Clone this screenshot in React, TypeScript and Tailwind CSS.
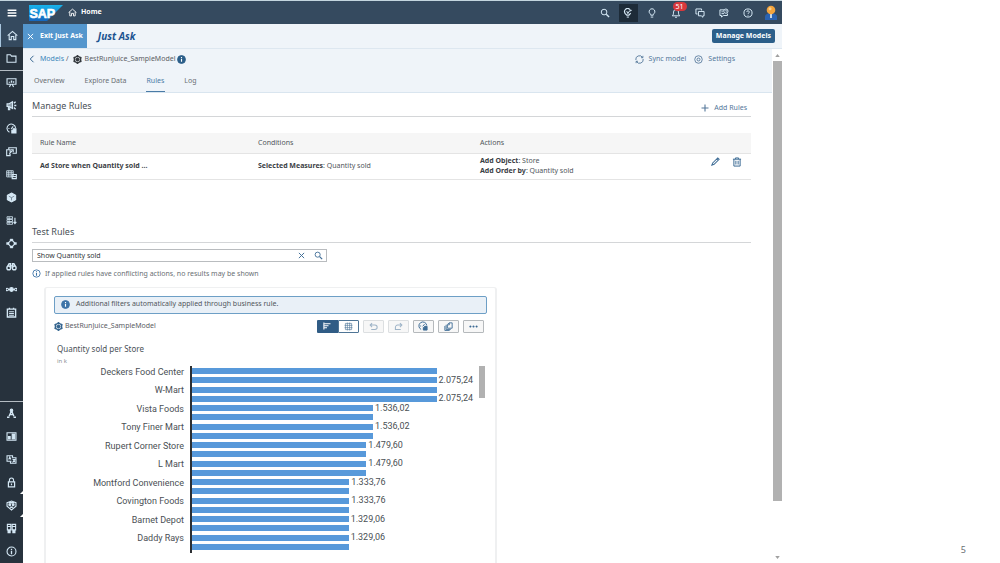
import { useState } from "react";
import type { ReactNode } from "react";

const glyphs: Record<string, ReactNode> = {
  menu: <path d="M1 3.5h14M1 8h14M1 12.5h14" strokeWidth="2.4" />,
  home: (
    <>
      <path d="M1 8.2 8 2l7 6.2" />
      <path d="M3.2 7v7h3V9.5h3.6V14h3V7" />
    </>
  ),
  folder: <path d="M1.5 13.5V2.5h5l1.5 2h6.5v9z" />,
  search: (
    <>
      <circle cx="6.5" cy="6.5" r="4.5" />
      <path d="m10 10 4.5 4.5" strokeWidth="2.2" />
    </>
  ),
  bulbSpark: (
    <>
      <path d="M10.500 1.800A5 5 0 0 0 3.300 8.500L6 11.500h3.500l2.800-3.200" strokeWidth="1.900" />
      <path d="M6 14.500h3.500" />
      <path d="m6 5 1.800 4 1.700-3.500 4-1.700-4-1.300" strokeWidth="1.600" />
    </>
  ),
  bulb: (
    <>
      <path d="M6 11.500V10A4.600 4.600 0 1 1 10 10v1.500z" />
      <path d="M6 14.500h4" />
    </>
  ),
  bell: (
    <>
      <path d="M2 12.500c2-1.500 2-3.500 2-6a4 4 0 0 1 8 0c0 2.500 0 4.500 2 6z" />
      <path d="M6.500 14.800h3" />
    </>
  ),
  chat: (
    <>
      <path d="M4 9.500H1.500v-8h9V4" />
      <path d="M5.500 5.500h9v7h-2v2.300L10 12.500H5.500z" />
    </>
  ),
  collab: (
    <>
      <path d="M8 3H1.500v9H4v2.500L7 12h6.500V9" />
      <circle cx="11" cy="5" r="3.400" />
      <path d="M11 3.500V5h1.500M4 6h2M4 9h4" />
    </>
  ),
  help: (
    <>
      <circle cx="8" cy="8" r="6.500" />
      <path d="M6 6.500a2 2 0 1 1 2.800 1.800c-.6.300-.8.600-.8 1.200M8 11v1.200" />
    </>
  ),
  story: (
    <>
      <path d="M1.500 2.500h13v8h-13zM5 14.500l2-4M11 14.500l-2-4" />
      <path d="M5 8.500V7M8 8.500V5M11 8.500V6" strokeWidth="2" />
    </>
  ),
  megaphone: (
    <>
      <path d="M1.500 5.500h3l5-3v10l-5-3h-3zM3.500 10v4h2v-3.500" fill="currentColor" fillOpacity="0.600" />
      <path d="M11.500 4.500 14 2.500M12 8h3M11.500 11l2.500 2.500" strokeWidth="2" />
    </>
  ),
  gauge: (
    <>
      <path d="M5 13.500A6.300 6.300 0 1 1 14 7M7.500 8.500l3-3.500M3.500 8H5" />
      <path d="M8.500 14.500v-4h2v-2h4v6z" fill="currentColor" />
    </>
  ),
  appDesign: (
    <>
      <path d="M4 5V2.500h11v8H9.500" />
      <path d="M1 5.500h5v8.500H1zM4.500 12l5-5.500" />
      <path d="M7 5.500h3.500V9" />
    </>
  ),
  dataset: (
    <>
      <path d="M1 2.500h9.500v9H1zM1 5.500h9.500M1 8.500h7M4 2.500v9M7.500 2.500v9" strokeWidth="1.200" />
      <path d="M9 8h6v6H9z" />
      <path d="M9 11h6" />
    </>
  ),
  cube: (
    <>
      <path d="m8 1.500 6 3.300v6.400L8 14.500l-6-3.300V4.800z" fill="currentColor" />
      <path d="m4 6 4 2.200L12 6M8 8.200v4" stroke="#596b7a" strokeWidth="1" />
    </>
  ),
  model: (
    <>
      <path d="m8 1.800 5.500 3.100v6.200L8 14.200l-5.500-3.100V4.900z" strokeWidth="2.400" />
      <path d="m8 5 2.800 1.500v3L8 11 5.200 9.500v-3z" fill="currentColor" />
      <g fill="currentColor" strokeWidth="0">
        <circle cx="8" cy="1.800" r="1.700" />
        <circle cx="13.500" cy="4.900" r="1.700" />
        <circle cx="13.500" cy="11.100" r="1.700" />
        <circle cx="8" cy="14.200" r="1.700" />
        <circle cx="2.500" cy="11.100" r="1.700" />
        <circle cx="2.500" cy="4.900" r="1.700" />
      </g>
    </>
  ),
  dataflow: (
    <>
      <path d="M1.500 2.500h8v3h-8zM1.500 6.500h8v3h-8zM1.500 10.500h8v3h-8zM4.500 3v10" strokeWidth="1.200" />
      <path d="M13 4v8M11 10l2 2.500 2-2.500" />
    </>
  ),
  network: (
    <>
      <path d="M8 2.500 13.500 8 8 13.500 2.500 8z" />
      <path d="M6 1.500h4v3H6zM6 11.500h4v3H6zM.8 6.500h3.700v3H.8zM11.500 6.500h3.700v3h-3.700z" fill="currentColor" strokeWidth="0.600" />
    </>
  ),
  binoculars: (
    <>
      <circle cx="4" cy="10" r="2.700" strokeWidth="2" />
      <circle cx="12" cy="10" r="2.700" strokeWidth="2" />
      <path d="M2.500 7.500 4.500 4h2v6M13.500 7.500l-2-3.500h-2v6M6.500 7h3" strokeWidth="2" />
    </>
  ),
  chain: (
    <>
      <circle cx="1.800" cy="8" r="1.800" />
      <circle cx="8" cy="8" r="2.700" fill="currentColor" />
      <circle cx="14.200" cy="8" r="1.800" />
      <path d="M3.600 8h8.800" />
    </>
  ),
  calendar: (
    <>
      <path d="M2 3h12v11.500H2zM5 1v3M11 1v3" strokeWidth="2" />
      <path d="M4.500 7h7M4.500 9.500h7M4.500 12h7" />
    </>
  ),
  compass: (
    <>
      <circle cx="8" cy="3.500" r="1.800" fill="currentColor" />
      <path d="M7.500 5 4.500 12M8.500 5l3 7M5 9.500h6" strokeWidth="2" />
      <path d="M1.500 13.500h3.500M11 13.500h3.500" strokeWidth="2.400" />
    </>
  ),
  layout: (
    <>
      <path d="M1.500 2.500h13v11h-13z" />
      <path d="M3.500 8h2.500v3.500H3.500zM9 4.500h3.500v7H9z" fill="currentColor" />
    </>
  ),
  translate: (
    <>
      <path d="M8 10.500H1.500v-8h8V5M4 8l1.500-3.500L7 8" />
      <path d="M8.500 5.500h6v8h-8v-3M9.500 8h4M12.500 8c0 2-1 3-3 4M10.500 9.500l2.500 2" />
    </>
  ),
  lock: (
    <>
      <path d="M5 7V4.500a3 3 0 0 1 6 0V7" />
      <path d="M3.500 7h9v7.500h-9zM8 9.500V12" strokeWidth="1.800" />
    </>
  ),
  support: (
    <>
      <path d="M1.500 4 8 1.500 14.500 4v5L8 14.500 1.500 9z" />
      <circle cx="5.500" cy="7" r="1.300" fill="currentColor" />
      <circle cx="10.500" cy="7" r="1.300" fill="currentColor" />
      <path d="M4 4h8M6 10.500h4" strokeWidth="2" />
    </>
  ),
  racks: (
    <>
      <path d="M2 2h5v8H2zM9 2h5v8H9zM2 5h5M9 5h5" />
      <path d="M3 14h3v-3H3zM10 14h3v-3h-3z" fill="currentColor" />
    </>
  ),
  info: (
    <>
      <circle cx="8" cy="8" r="6.500" />
      <path d="M8 7v5M8 4v1.700" strokeWidth="1.900" />
    </>
  ),
  infoSolid: (
    <>
      <circle cx="8" cy="8" r="7" fill="currentColor" />
      <path d="M8 7v5M8 3.700v2" stroke="#fff" strokeWidth="2" />
    </>
  ),
  close: <path d="m2 2 12 12M14 2 2 14" strokeWidth="2.200" />,
  back: <path d="M11 1.500 4.500 8l6.500 6.500" strokeWidth="2" />,
  sync: (
    <>
      <path d="M1.500 9A6.500 6.500 0 0 1 13.500 4.500M14.500 7A6.500 6.500 0 0 1 2.500 11.500" />
      <path d="M14 1.500v3.300h-3.300M2 14.500v-3.300h3.300" />
    </>
  ),
  settings: (
    <>
      <circle cx="8" cy="8" r="6.700" strokeWidth="1.500" />
      <circle cx="8" cy="8" r="2.600" />
    </>
  ),
  plus: <path d="M8 1v14M1 8h14" strokeWidth="2.200" />,
  edit: <path d="M1.500 14.500 3 10.500 12 1.500l2.500 2.500-9 9zM10 3.500 12.500 6" strokeWidth="1.800" />,
  trash: <path d="M1.500 3.500h13M5.500 3.500v-2h5v2M3 3.500v11h10v-11M6.200 6v6M9.800 6v6" />,
  bars: <path d="M1.800 1v14M3 3.500h12M3 7.500h8M3 11.500h5" strokeWidth="2.200" />,
  grid: <path d="M2.500 2.500h11v11h-11zM1 6h14M1 10h14M6 1v14M10 1v14" strokeWidth="1.100" />,
  undo: <path d="M5.500 2 2 5.500 5.500 9M2 5.500h8.500a3.800 3.800 0 0 1 0 8H4" strokeWidth="1.800" />,
  redo: <path d="M10.500 2 14 5.500 10.500 9M14 5.500H6.500a4 4 0 0 0-4 4v4H12" strokeWidth="1.800" />,
  copy: (
    <>
      <path d="M6 11V4.500l3-3h5.500V11z" />
      <path d="M3.800 5v8.200H12M1.500 7v8H10M6.500 5h3V2" />
    </>
  ),
  more: (
    <g fill="currentColor" strokeWidth="0.600">
      <circle cx="2.500" cy="8" r="1.500" />
      <circle cx="8" cy="8" r="1.500" />
      <circle cx="13.500" cy="8" r="1.500" />
    </g>
  ),
};

function Icon({ name, className = "size-[11px]" }: { name: string; className?: string }) {
  return (
    <svg viewBox="0 0 16 16" className={`shrink-0 ${className}`} fill="none" stroke="currentColor" strokeWidth="1.600" aria-hidden="true">
      {glyphs[name]}
    </svg>
  );
}

const mainNav = [
  ["story", "Stories"],
  ["megaphone", "Digital boardroom"],
  ["gauge", "Analytics"],
  ["appDesign", "Applications"],
  ["dataset", "Datasets"],
  ["cube", "Modeler"],
  ["dataflow", "Data flow"],
  ["network", "Allocations"],
  ["binoculars", "Data analyzer"],
  ["chain", "Multi actions"],
  ["calendar", "Calendar"],
];

const footerNav = [
  ["compass", "Content network"],
  ["layout", "Catalog"],
  ["translate", "Translation"],
  ["lock", "Security", "more"],
  ["support", "System", "more"],
  ["racks", "Deployment"],
  ["info", "About"],
];

function NavItem({ icon, label, active, more }: { icon: string; label: string; active?: boolean; more?: boolean }) {
  return (
    <button
      aria-label={label}
      className={`relative flex h-[23px] w-full items-center justify-center text-[#d5e8f5] ${active ? "border-l border-[#a9c6de] bg-[#354a5f]" : ""}`}
    >
      <Icon name={icon} />
      {more && (
        <svg viewBox="0 0 4 4" className="absolute right-0 bottom-0 size-[3px] fill-white" aria-hidden="true">
          <path d="M4 0v4H0z" />
        </svg>
      )}
    </button>
  );
}

const tools = [
  ["search", "Search"],
  ["bulbSpark", "Just Ask"],
  ["bulb", "Search to insight"],
  ["bell", "Notifications"],
  ["chat", "Discussions"],
  ["collab", "Collaboration"],
  ["help", "Help"],
];

function ShellBar() {
  return (
    <header className="flex h-6 shrink-0 items-center border-t border-[#c3d5de] bg-[#354a5f] text-white">
      <button aria-label="Menu" className="flex h-full w-[23px] items-center justify-center">
        <Icon name="menu" className="size-[10px]" />
      </button>
      <svg viewBox="0 0 34 16" className="ml-[6px] h-4 w-[34px]" role="img" aria-label="SAP">
        <defs>
          <linearGradient id="logo" x1="0" y1="0" x2="0" y2="1">
            <stop offset="0" stopColor="#18b4ec" />
            <stop offset="1" stopColor="#1666bd" />
          </linearGradient>
        </defs>
        <path d="M0 0h34L18 16H0z" fill="url(#logo)" />
        <text x="0.500" y="12.500" fill="#fff" stroke="#fff" strokeWidth="0.600" fontSize="12.500" fontWeight="700" fontFamily="Liberation Sans, sans-serif">
          SAP
        </text>
      </svg>
      <a href="#home" className="ml-[5px] flex items-center gap-[4px] text-[7px] font-bold">
        <Icon name="home" className="size-[9px]" />
        Home
      </a>
      <div className="ml-auto flex h-full items-center">
        {tools.map(([icon, label]) => (
          <div key={icon} className="flex w-[24px] justify-center first:w-[23px] last:w-[23px]">
            <button
              aria-label={label}
              className={`relative flex h-[18px] w-[19px] items-center justify-center text-[#d5e8f5] ${icon === "bulbSpark" ? "bg-[#1d2b38]" : ""}`}
            >
              <Icon name={icon} className="size-[10px]" />
              {icon === "bell" && (
                <span className="absolute -top-[2px] left-[6px] rounded-full bg-[#d8383c] px-[3px] text-[7px] leading-[9px] text-white">51</span>
              )}
            </button>
          </div>
        ))}
      </div>
      <svg viewBox="0 0 12 16" className="mr-[5px] ml-[6px] h-4 w-3" role="img" aria-label="Profile">
        <path d="M0 15v-3c0-3 3-4 6-4s6 1 6 4v3z" fill="#2a62b0" />
        <path d="M5 9h2v4H5z" fill="#c9d6e4" />
        <circle cx="6" cy="5" r="4.300" fill="#f3a43c" />
        <circle cx="5" cy="3.800" r="1.500" fill="#fbd08c" />
      </svg>
    </header>
  );
}

function SectionHeading({ title, children }: { title: string; children?: ReactNode }) {
  return (
    <div className="flex h-6 items-center justify-between border-b border-[#d4d6d8] pt-[3px] pr-1">
      <h2 className="text-[9px] text-[#4a5157]">{title}</h2>
      {children}
    </div>
  );
}

function RulesTable() {
  return (
    <table className="mt-4 w-full table-fixed border-collapse text-left text-[7px] leading-[10px] text-[#51565b]">
      <colgroup>
        <col className="w-[218px]" />
        <col className="w-[222px]" />
        <col className="w-[222px]" />
        <col />
      </colgroup>
      <thead>
        <tr className="h-5 border-b border-[#e4e4e4] bg-[#f6f6f6]">
          <th className="pl-2 font-normal">Rule Name</th>
          <th className="pl-2 font-normal">Conditions</th>
          <th className="pl-2 font-normal">Actions</th>
          <th aria-label="Edit" />
        </tr>
      </thead>
      <tbody>
        <tr className="h-[26px] border-b border-[#e4e4e4]">
          <td className="pl-2 font-bold text-[#3b4045]">Ad Store when Quantity sold ...</td>
          <td className="pl-2">
            <b className="text-[#3b4045]">Selected Measures</b>: Quantity sold
          </td>
          <td className="pl-2">
            <b className="text-[#3b4045]">Add Object</b>: Store
            <br />
            <b className="text-[#3b4045]">Add Order by</b>: Quantity sold
          </td>
          <td className="pt-[3px] align-top">
            <div className="flex items-center justify-end gap-3 pr-[9px] text-[#3f6d96]">
              <button aria-label="Edit rule"><Icon name="edit" className="size-[9px]" /></button>
              <button aria-label="Delete rule"><Icon name="trash" className="size-[10px]" /></button>
            </div>
          </td>
        </tr>
      </tbody>
    </table>
  );
}

const stores = [
  { name: "Deckers Food Center", value: 2075.24, label: "2.075,24", below: true },
  { name: "W-Mart", value: 2075.24, label: "2.075,24", below: true },
  { name: "Vista Foods", value: 1536.02, label: "1.536,02" },
  { name: "Tony Finer Mart", value: 1536.02, label: "1.536,02" },
  { name: "Rupert Corner Store", value: 1479.6, label: "1.479,60" },
  { name: "L Mart", value: 1479.6, label: "1.479,60" },
  { name: "Montford Convenience", value: 1333.76, label: "1.333,76" },
  { name: "Covington Foods", value: 1333.76, label: "1.333,76" },
  { name: "Barnet Depot", value: 1329.06, label: "1.329,06" },
  { name: "Daddy Rays", value: 1329.06, label: "1.329,06" },
];
const axisMax = 2435;

function Bar({ value, label }: { value: number; label?: string }) {
  return (
    <div className="flex min-h-0 items-center gap-[2px]">
      <div className="h-[6px] shrink-0 bg-[#5899da]" style={{ width: `${(value / axisMax) * 100}%` }} />
      {label && <span className="leading-[11px]">{label}</span>}
    </div>
  );
}

function StoreChart() {
  return (
    <div className="flex h-[187px] font-[Roboto,Arial,sans-serif] text-[9px] text-[#4a4f54]">
      <div className="grid w-[136px] grid-rows-10 pr-[6px] pb-[2px] text-right">
        {stores.map((s) => (
          <div key={s.name} className="leading-[12px]">{s.name}</div>
        ))}
      </div>
      <div className="grid flex-1 grid-rows-10 border-l-2 border-[#2d3033] pt-px pb-px">
        {stores.map((s) => (
          <div key={s.name} className="grid min-h-0 grid-rows-2">
            <Bar value={s.value} label={s.below ? undefined : s.label} />
            <Bar value={s.value} label={s.below ? s.label : undefined} />
          </div>
        ))}
      </div>
      <div className="mr-[2px] h-8 w-[6px] bg-[#b1b1b1]" />
    </div>
  );
}

const toolButton = "flex h-[13px] w-[21px] items-center justify-center rounded-[1px] border bg-[#f7f7f7]";

function ResultCard() {
  return (
    <section className="mt-[7px] ml-3 min-h-0 w-[63%] flex-1 overflow-hidden rounded-t-[3px] border-x-2 border-t border-[#eff0f1] px-2 pt-2">
      <div role="status" className="flex h-[18px] items-center gap-[6px] rounded-[2px] border border-[#6d9fc6] bg-[#e9f0f7] px-[6px] text-[7px] text-[#51565b]">
        <Icon name="infoSolid" className="size-[9px] text-[#3f75a8]" />
        Additional filters automatically applied through business rule.
      </div>
      <div className="mt-[6px] flex items-center">
        <span className="flex items-center gap-[2px] text-[7px] text-[#5b6065]">
          <Icon name="model" className="size-[9px] text-[#35658f]" />
          BestRunJuice_SampleModel
        </span>
        <div className="mr-[3px] ml-auto flex gap-1">
          <div className="flex">
            <button aria-label="Chart" className="flex h-[13px] w-[21px] items-center justify-center rounded-l-[1px] bg-[#305c85] text-white">
              <Icon name="bars" className="size-2" />
            </button>
            <button aria-label="Table" className="flex h-[13px] w-[21px] items-center justify-center rounded-r-[1px] border border-[#4f7596] text-[#51789b]">
              <Icon name="grid" className="size-[9px]" />
            </button>
          </div>
          <button aria-label="Undo" disabled className={`${toolButton} border-[#dcdfe1] text-[#9db3c7]`}><Icon name="undo" className="size-[9px]" /></button>
          <button aria-label="Redo" disabled className={`${toolButton} border-[#dcdfe1] text-[#9db3c7]`}><Icon name="redo" className="size-[9px]" /></button>
          <button aria-label="Smart insights" className={`${toolButton} border-[#b5b9bc] text-[#3f6d96]`}><Icon name="gauge" className="size-[10px]" /></button>
          <button aria-label="Copy" className={`${toolButton} border-[#b5b9bc] text-[#3f6d96]`}><Icon name="copy" className="size-[9px]" /></button>
          <button aria-label="More" className={`${toolButton} border-[#b5b9bc] text-[#3f6d96]`}><Icon name="more" className="size-[9px]" /></button>
        </div>
      </div>
      <h3 className="mt-[10px] ml-[3px] text-[8px] leading-3 text-[#4a5157]">Quantity sold per Store</h3>
      <p className="mt-[3px] mb-[1px] ml-[3px] text-[6px] leading-[7px] text-[#8a8f94]">in k</p>
      <StoreChart />
    </section>
  );
}

const tabs = ["Overview", "Explore Data", "Rules", "Log"];

export default function App() {
  const [query, setQuery] = useState("Show Quantity sold");
  const [tab, setTab] = useState("Rules");

  return (
    <div className="grid h-screen grid-cols-[782fr_218fr] overflow-hidden bg-white font-['Noto_Sans',sans-serif]">
      <div className="flex min-h-0 flex-col">
        <ShellBar />
        <div className="flex min-h-0 flex-1">
          <nav className="flex w-[23px] shrink-0 flex-col justify-between bg-[#27323d]">
            <div>
              <NavItem icon="home" label="Home" active />
              <NavItem icon="folder" label="Files" />
              <div className="border-t border-[#b4bcc3]">
                {mainNav.map(([icon, label]) => (
                  <NavItem key={icon} icon={icon} label={label} />
                ))}
              </div>
            </div>
            <div className="border-t border-[#b4bcc3]">
              {footerNav.map(([icon, label, more]) => (
                <NavItem key={icon} icon={icon} label={label} more={more === "more"} />
              ))}
            </div>
          </nav>
          <div className="flex min-w-0 flex-1 flex-col">
            <div className="flex h-[25px] shrink-0 items-center border-b border-[#dde7f0] bg-[#eff4f9]">
              <button className="flex h-full items-center gap-[6px] bg-[#5496cd] pr-[4px] pl-1 text-[7px] font-bold text-white">
                <Icon name="close" className="size-[7px]" />
                Exit Just Ask
              </button>
              <h1 className="ml-[11px] text-[10px] font-bold text-[#1c5390] italic">Just Ask</h1>
              <button className="mr-[7px] ml-auto h-[14px] rounded-[2px] bg-[#2c5f8a] px-1 text-[7px] leading-[14px] font-bold text-white">Manage Models</button>
            </div>
            <div className="flex min-h-0 flex-1">
              <main className="flex min-w-0 flex-1 flex-col">
                <div className="shrink-0 border-b border-[#d9e5ef] bg-[#eff4f9]">
                  <div className="flex h-5 items-center pr-[37px] pl-[5px] text-[7px] text-[#5b6065]">
                    <button aria-label="Back" className="text-[#35658f]"><Icon name="back" className="size-[8px]" /></button>
                    <a href="#models" className="ml-1 text-[#3a86ba]">Models</a>
                    <span className="ml-[2px]">/</span>
                    <Icon name="model" className="mr-[3px] ml-[4px] size-[9px] text-[#33383d]" />
                    <span>BestRunJuice_SampleModel</span>
                    <Icon name="infoSolid" className="ml-[2px] size-[9px] text-[#2c5f8a]" />
                    <button className="ml-auto flex items-center gap-[5px] text-[#54779a]">
                      <Icon name="sync" className="size-[9px]" />
                      Sync model
                    </button>
                    <button className="ml-2 flex items-center gap-[5px] text-[#54779a]">
                      <Icon name="settings" className="size-[9px]" />
                      Settings
                    </button>
                  </div>
                  <div role="tablist" className="flex h-[23px] gap-[18px] pl-[10px] text-[7px]">
                    {tabs.map((t) => (
                      <button
                        key={t}
                        role="tab"
                        aria-selected={t === tab}
                        onClick={() => setTab(t)}
                        className={`border-b px-px pt-[2px] ${t === tab ? "border-[#4a7ba6] text-[#4a7ba6]" : "border-transparent text-[#6a6f74]"}`}
                      >
                        {t}
                      </button>
                    ))}
                  </div>
                </div>
                <div className="flex min-h-0 flex-1 flex-col pr-[21px] pl-[9px]">
                  <SectionHeading title="Manage Rules">
                    <button className="mt-1 flex items-center gap-[5px] text-[7px] text-[#54779a]">
                      <Icon name="plus" className="size-[8px]" />
                      Add Rules
                    </button>
                  </SectionHeading>
                  <RulesTable />
                  <div className="mt-[39px]">
                    <SectionHeading title="Test Rules" />
                  </div>
                  <div className="mt-[6px] flex h-[13px] w-[41%] shrink-0 items-center border border-[#b9bcbf] pr-[3px] pl-1 text-[#3f6d96]">
                    <input
                      aria-label="Test question"
                      value={query}
                      onChange={(e) => setQuery(e.target.value)}
                      className="h-full min-w-0 flex-1 text-[7px] leading-[11px] text-[#32363a] outline-none"
                    />
                    <button aria-label="Clear" onClick={() => setQuery("")}><Icon name="close" className="size-[7px]" /></button>
                    <button aria-label="Search" className="ml-[9px]"><Icon name="search" className="size-[9px]" /></button>
                  </div>
                  <p className="mt-[6px] flex items-center gap-1 text-[7px] leading-3 text-[#6a6f74]">
                    <Icon name="info" className="size-[9px] text-[#3f75a8]" />
                    If applied rules have conflicting actions, no results may be shown
                  </p>
                  <ResultCard />
                </div>
              </main>
              <div className="flex w-[10px] shrink-0 flex-col items-center bg-white pt-[5px] pb-1">
                <svg viewBox="0 0 6 4" className="h-[3px] w-[5px] fill-[#a0a0a0]" aria-hidden="true"><path d="M3 0l3 4H0z" /></svg>
                <div className="mt-1 mb-[55px] w-[9px] flex-1 bg-[#b1b1b1]" />
                <svg viewBox="0 0 6 4" className="h-[3px] w-[5px] fill-[#a0a0a0]" aria-hidden="true"><path d="M3 4l3-4H0z" /></svg>
              </div>
            </div>
          </div>
        </div>
      </div>
      <footer className="flex items-end justify-end pr-[34px] pb-[7px] text-[9px] text-[#6a6f74]">5</footer>
    </div>
  );
}
